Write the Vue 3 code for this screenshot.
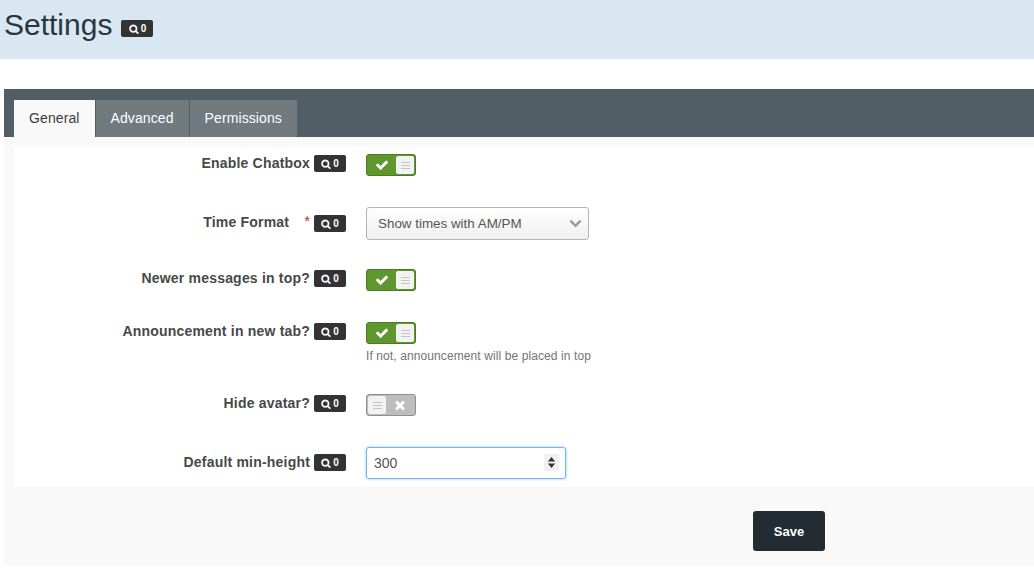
<script setup>
const tabs = ['General', 'Advanced', 'Permissions']
const SEARCH = 'M1216 832q0-185-131.500-316.500t-316.500-131.500-316.500 131.500-131.500 316.500 131.500 316.500 316.500 131.500 316.500-131.500 131.500-316.500zm512 832q0 52-38 90t-90 38q-54 0-90-38l-343-342q-179 124-399 124-143 0-273.500-55.500t-225-150-150-225-55.500-273.500 55.500-273.500 150-225 225-150 273.500-55.500 273.500 55.500 225 150 150 225 55.500 273.500q0 220-124 399l343 343q37 37 37 90z'
const CHECK = 'M1671 566q0 40-28 68l-724 724-136 136q-28 28-68 28t-68-28l-136-136-362-362q-28-28-28-68t28-68l136-136q28-28 68-28t68 28l294 295 656-657q28-28 68-28t68 28l136 136q28 28 28 68z'
const TIMES = 'M1490 1322q0 40-28 68l-136 136q-28 28-68 28t-68-28l-294-294-294 294q-28 28-68 28t-68-28l-136-136q-28-28-28-68t28-68l294-294-294-294q-28-28-28-68t28-68l136-136q28-28 68-28t68 28l294 294 294-294q28-28 68-28t68 28l136 136q28 28 28 68t-28 68l-294 294 294 294q28 28 28 68z'
const rows = [
  { label: 'Enable Chatbox', type: 'on' },
  { label: 'Time Format', type: 'select', required: true },
  { label: 'Newer messages in top?', type: 'on' },
  { label: 'Announcement in new tab?', type: 'on', help: 'If not, announcement will be placed in top' },
  { label: 'Hide avatar?', type: 'off' },
  { label: 'Default min-height', type: 'number' }
]
</script>

<template>
  <div class="page">
    <header class="head">
      <h1 class="title">Settings</h1>
      <span class="badge badge-title">
        <svg class="badge-icon" viewBox="0 0 1792 1792"><path :d="SEARCH" /></svg>0
      </span>
    </header>

    <main class="panel">
      <nav class="tabbar">
        <a v-for="(t, i) in tabs" :key="t" class="tab" :class="{ active: i === 0 }">{{ t }}</a>
      </nav>

      <div class="body">
        <form class="form" @submit.prevent>
          <div v-for="r in rows" :key="r.label" class="row" :class="'row-' + r.type">
            <div class="label-cell">
              <label class="label">{{ r.label }}</label>
              <span v-if="r.required" class="star">*</span>
              <span class="badge badge-row">
                <svg class="badge-icon" viewBox="0 0 1792 1792"><path :d="SEARCH" /></svg>0
              </span>
            </div>
            <div class="control">
              <div v-if="r.type === 'on'" class="switch on">
                <span class="side">
                  <svg class="mark" viewBox="0 0 1792 1792"><path :d="CHECK" /></svg>
                </span>
                <span class="handle"><i></i><i></i><i></i></span>
              </div>
              <div v-else-if="r.type === 'off'" class="switch off">
                <span class="handle"><i></i><i></i><i></i></span>
                <span class="side">
                  <svg class="mark" viewBox="0 0 1792 1792"><path :d="TIMES" /></svg>
                </span>
              </div>
              <div v-else-if="r.type === 'select'" class="select">
                <span>Show times with AM/PM</span>
                <svg class="chev" viewBox="0 0 14 9"><path d="M1.500 1.500 7 7l5.500-5.500" /></svg>
              </div>
              <div v-else class="number">
                <input class="number-input" type="text" value="300" readonly />
                <span class="spin">
                  <svg viewBox="0 0 10 14"><path d="M5 1l4 5H1zM5 13 1 8h8z" /></svg>
                </span>
              </div>
              <p v-if="r.help" class="help">{{ r.help }}</p>
            </div>
          </div>
        </form>
        <div class="actions">
          <button class="save" type="button">Save</button>
        </div>
      </div>
    </main>
  </div>
</template>

<style>
html, body { margin: 0; background: #fff; }
</style>

<style scoped>
.page {
  width: 1034px;
  height: 576px;
  overflow: hidden;
  font-family: "Liberation Sans", Arial, sans-serif;
  background: #fff;
}
.head {
  height: 59px;
  box-sizing: border-box;
  padding: 5px 0 0 4px;
  background: #d9e7f3;
  display: flex;
  align-items: flex-start;
  gap: 9px;
}
.title {
  margin: 0;
  font-size: 30px;
  line-height: 40px;
  font-weight: 400;
  color: #2a3540;
}
.badge {
  display: inline-flex;
  align-items: center;
  justify-content: center;
  gap: 2px;
  width: 32px;
  height: 17px;
  flex: none;
  border-radius: 2px;
  background: #333;
  color: #fff;
  font-size: 10px;
  font-weight: 700;
}
.badge-title { margin-top: 15px; }
.badge-row { margin-top: 1px; }
.badge-icon { width: 10px; height: 10px; fill: #fff; stroke: #fff; stroke-width: 60; }

.panel {
  margin: 30px 0 0 4px;
  background: #f9f9f9;
  height: 477px;
}
.tabbar {
  height: 48px;
  box-sizing: border-box;
  padding: 11px 0 0 10px;
  background: #515e66;
  display: flex;
  gap: 1px;
}
.tab {
  box-sizing: border-box;
  height: 37px;
  padding: 0 15px;
  line-height: 37px;
  font-size: 14px;
  letter-spacing: 0.1px;
  color: #fff;
  background: #707a7f;
}
.tab.active {
  color: #3c3c3c;
  background: #f9f9f9;
}
.body { padding: 10px 0 0 10px; }
.form {
  background: #fff;
  height: 339px;
  box-sizing: border-box;
  padding-top: 7px;
}
.row {
  display: flex;
  gap: 20px;
  margin-bottom: 31px;
}
.row-select { margin-bottom: 29px; }
.label-cell {
  width: 332px;
  display: flex;
  justify-content: flex-end;
  align-items: flex-start;
  gap: 4px;
  flex: none;
}
.row-select .label-cell { padding-top: 6px; }
.row-select .badge-row { margin-top: 2px; }
.row-number .label-cell { padding-top: 6px; }
.label {
  font-size: 14px;
  line-height: 18px;
  font-weight: 700;
  letter-spacing: 0.2px;
  color: #484848;
}
.star {
  color: #c9302c;
  font-size: 15px;
  line-height: 15px;
  margin: 0 0 0 11px;
}
.switch {
  width: 50px;
  height: 22px;
  box-sizing: border-box;
  border-radius: 3px;
  display: flex;
  padding: 1px;
  border: 1px solid #4a7d22;
  background: #5f962f;
}
.switch.off {
  border-color: #8f8f8f;
  background: #bdbdbd;
}
.side {
  flex: 1;
  display: flex;
  align-items: center;
  justify-content: center;
}
.mark { width: 14px; height: 14px; fill: #fff; }
.handle {
  width: 18px;
  flex: none;
  border-radius: 2px;
  background: #f2f2f2;
  display: flex;
  flex-direction: column;
  align-items: center;
  justify-content: center;
  gap: 2px;
}
.handle i { display: block; width: 9px; height: 1px; background: #c4c4c4; }
.select {
  width: 223px;
  height: 33px;
  box-sizing: border-box;
  padding: 0 11px;
  border: 1px solid #b5b5b5;
  border-radius: 3px;
  background: linear-gradient(#fff, #efefef);
  display: flex;
  align-items: center;
  justify-content: space-between;
  font-size: 13.400px;
  color: #555;
}
.chev {
  width: 13px;
  height: 9px;
  margin-right: -5px;
  fill: none;
  stroke: #999;
  stroke-width: 2.600;
}
.help {
  margin: 5px 0 0;
  font-size: 12px;
  line-height: 14px;
  letter-spacing: 0.1px;
  color: #737373;
}
.number {
  position: relative;
  width: 200px;
  height: 32px;
}
.number-input {
  display: block;
  width: 100%;
  height: 100%;
  box-sizing: border-box;
  padding: 0 7px;
  border: 1px solid #76b6ee;
  border-radius: 3px;
  box-shadow: 0 0 3px #8cc4f3;
  outline: none;
  background: #fff;
  font: 14px "Liberation Sans", Arial, sans-serif;
  color: #555;
}
.spin {
  position: absolute;
  right: 7px;
  top: 7px;
  width: 15px;
  height: 17px;
  background: #f0f0f0;
  display: flex;
  align-items: center;
  justify-content: center;
}
.spin svg { width: 9px; height: 13px; fill: #333; }
.actions {
  display: flex;
  padding: 25px 0 0 739px;
}
.save {
  width: 72px;
  height: 40px;
  border: 0;
  border-radius: 3px;
  background: #232c33;
  color: #fff;
  font: 700 13px "Liberation Sans", Arial, sans-serif;
}
</style>
